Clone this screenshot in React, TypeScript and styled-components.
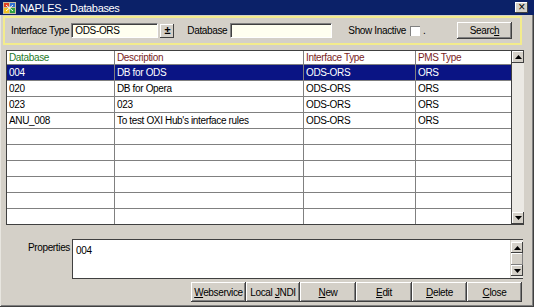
import React from "react";
import styled, { createGlobalStyle } from "styled-components";

const GlobalStyle = createGlobalStyle`
  html, body {
    margin: 0;
    padding: 0;
    background: #d4d0c8;
  }
  body {
    font-family: "Liberation Sans", Arial, sans-serif;
    font-size: 10px;
    letter-spacing: -0.35px;
    color: #000;
  }
`;

const rows = [
  { db: "004", desc: "DB for ODS", type: "ODS-ORS", pms: "ORS" },
  { db: "020", desc: "DB for Opera", type: "ODS-ORS", pms: "ORS" },
  { db: "023", desc: "023", type: "ODS-ORS", pms: "ORS" },
  { db: "ANU_008", desc: "To test OXI Hub's interface rules", type: "ODS-ORS", pms: "ORS" },
];

const columns = [
  { label: "Database", width: 108, key: true },
  { label: "Description", width: 189 },
  { label: "Interface Type", width: 112 },
  { label: "PMS Type", width: 94 },
];

const TitleIcon = () => (
  <svg width="13" height="12" viewBox="0 0 13 12">
    <rect x="0" y="0" width="13" height="12" fill="#c8c0a0" />
    <rect x="1" y="1" width="5" height="4" fill="#e04020" />
    <rect x="7" y="1" width="5" height="4" fill="#3070d0" />
    <rect x="1" y="6" width="5" height="5" fill="#f0c020" />
    <rect x="7" y="6" width="5" height="5" fill="#30a040" />
    <path d="M3 3 L10 9 M10 3 L3 9" stroke="#fff" strokeWidth="1" />
  </svg>
);

const Arrow = ({ up }: { up?: boolean }) => (
  <svg width="7" height="4" viewBox="0 0 7 4">
    <path d={up ? "M3.5 0 L7 4 L0 4 Z" : "M0 0 L7 0 L3.5 4 Z"} fill="#000" />
  </svg>
);

const App = () => {
  const empty = Array.from({ length: 6 });
  return (
    <>
      <GlobalStyle />
      <Window>
        <TitleBar>
          <TitleIcon />
          <TitleText>NAPLES - Databases</TitleText>
          <CloseBox>×</CloseBox>
        </TitleBar>

        <FilterPanel>
          <Label>Interface Type</Label>
          <Field $width={87} style={{ marginLeft: 2 }}>ODS-ORS</Field>
          <ComboBtn>±</ComboBtn>
          <Label style={{ marginLeft: 13 }}>Database</Label>
          <Field $width={102} style={{ marginLeft: 3 }} />
          <Label style={{ marginLeft: 16 }}>Show Inactive</Label>
          <Check />
          <Label style={{ marginLeft: 3 }}>.</Label>
          <Button $width={55} $height={17} style={{ marginLeft: "auto" }}>
            <span>
              Searc<u>h</u>
            </span>
          </Button>
        </FilterPanel>

        <GridWrap>
          <Grid>
            <HeaderRow>
              {columns.map((c) => (
                <HeadCell key={c.label} $width={c.width} $key={!!c.key}>
                  {c.label}
                </HeadCell>
              ))}
            </HeaderRow>
            {rows.map((r, i) => (
              <Row key={r.db} $selected={i === 0}>
                <Cell $width={108}>{r.db}</Cell>
                <Cell $width={189}>{r.desc}</Cell>
                <Cell $width={112}>{r.type}</Cell>
                <Cell $width={94}>{r.pms}</Cell>
              </Row>
            ))}
            {empty.map((_, i) => (
              <Row key={i}>
                {columns.map((c) => (
                  <Cell key={c.label} $width={c.width} />
                ))}
              </Row>
            ))}
          </Grid>
          <ScrollBar>
            <ScrollBtn>
              <Arrow up />
            </ScrollBtn>
            <Track />
            <ScrollBtn>
              <Arrow />
            </ScrollBtn>
          </ScrollBar>
        </GridWrap>

        <PropsRow>
          <PropsLabel>Properties</PropsLabel>
          <TextArea>
            <TextBody>004</TextBody>
            <ScrollBar $inset>
              <ScrollBtn>
                <Arrow up />
              </ScrollBtn>
              <Thumb />
              <Track />
              <ScrollBtn>
                <Arrow />
              </ScrollBtn>
            </ScrollBar>
          </TextArea>
        </PropsRow>

        <ButtonRow>
          <Button $width={55}>
            <span>
              <u>W</u>ebservice
            </span>
          </Button>
          <Button $width={54}>
            <span>
              Local <u>J</u>NDI
            </span>
          </Button>
          <Button $width={56}>
            <span>
              <u>N</u>ew
            </span>
          </Button>
          <Button $width={56}>
            <span>
              <u>E</u>dit
            </span>
          </Button>
          <Button $width={55}>
            <span>
              <u>D</u>elete
            </span>
          </Button>
          <Button $width={55}>
            <span>
              <u>C</u>lose
            </span>
          </Button>
        </ButtonRow>
      </Window>
    </>
  );
};

const Window = styled.div`
  width: 534px;
  height: 307px;
  box-sizing: border-box;
  background: #d4d0c8;
  display: flex;
  flex-direction: column;
  box-shadow: inset -1px -1px 0 #404040, inset 1px 1px 0 #e8e6e0,
    inset -2px -2px 0 #808080;
`;

const TitleBar = styled.div`
  height: 15px;
  background: #0b2168;
  display: flex;
  align-items: center;
  padding: 0 6px 0 3px;
  color: #fff;
`;

const TitleText = styled.span`
  margin-left: 4px;
  font-size: 11px;
`;

const CloseBox = styled.div`
  margin-left: auto;
  width: 13px;
  height: 11px;
  background: #d4d0c8;
  color: #000;
  font-size: 12px;
  line-height: 10px;
  text-align: center;
  box-shadow: inset -1px -1px 0 #404040, inset 1px 1px 0 #fff;
`;

const FilterPanel = styled.div`
  margin: 1px 12px 0 3px;
  height: 25px;
  border: 2px solid #f3ec8c;
  display: flex;
  align-items: center;
  padding: 0 8px 0 6px;
`;

const Label = styled.span`
  white-space: nowrap;
`;

const Field = styled.div<{ $width: number }>`
  width: ${(p) => p.$width}px;
  height: 15px;
  box-sizing: border-box;
  background: #fffff0;
  border-top: 1px solid #808080;
  border-left: 1px solid #808080;
  border-bottom: 1px solid #fff;
  border-right: 1px solid #fff;
  box-shadow: inset 1px 1px 0 #404040;
  padding: 1px 0 0 3px;
  line-height: 12px;
`;

const ComboBtn = styled.div`
  width: 14px;
  height: 14px;
  margin-left: 2px;
  box-sizing: border-box;
  text-align: center;
  line-height: 13px;
  font-size: 11px;
  font-weight: bold;
  box-shadow: inset -1px -1px 0 #404040, inset 1px 1px 0 #fff;
`;

const Check = styled.div`
  width: 10px;
  height: 10px;
  margin-left: 4px;
  background: #fff;
  box-shadow: inset 1px 1px 0 #808080;
`;

const Button = styled.div<{ $width: number; $height?: number }>`
  width: ${(p) => p.$width}px;
  height: ${(p) => p.$height ?? 20}px;
  box-sizing: border-box;
  display: flex;
  align-items: center;
  justify-content: center;
  white-space: nowrap;
  background: #d4d0c8;
  box-shadow: inset -1px -1px 0 #404040, inset 1px 1px 0 #fff,
    inset -2px -2px 0 #808080;
`;

const GridWrap = styled.div`
  margin: 5px 10px 0 6px;
  display: flex;
  height: 175px;
`;

const Grid = styled.div`
  flex: 1;
  background: #fff;
  border: 1px solid #404040;
  border-right: none;
  overflow: hidden;
`;

const HeaderRow = styled.div`
  display: flex;
  height: 13px;
  border-bottom: 1px solid #808080;
`;

const HeadCell = styled.div<{ $width: number; $key: boolean }>`
  width: ${(p) => p.$width}px;
  box-sizing: border-box;
  padding-left: 2px;
  line-height: 13px;
  color: ${(p) => (p.$key ? "#1e7a2a" : "#7a1e1e")};
  border-right: 1px solid #808080;
  &:last-child {
    border-right: none;
  }
`;

const Row = styled.div<{ $selected?: boolean }>`
  display: flex;
  height: 15px;
  border-bottom: 1px solid #808080;
  background: ${(p) => (p.$selected ? "#0a1484" : "#fff")};
  color: ${(p) => (p.$selected ? "#fff" : "#000")};
`;

const Cell = styled.div<{ $width: number }>`
  width: ${(p) => p.$width}px;
  box-sizing: border-box;
  padding-left: 2px;
  line-height: 15px;
  white-space: nowrap;
  border-right: 1px solid #808080;
  &:last-child {
    border-right: none;
  }
`;

const ScrollBar = styled.div<{ $inset?: boolean }>`
  width: 12px;
  display: flex;
  flex-direction: column;
  background: #ebe9e4;
  border-left: 1px solid ${(p) => (p.$inset ? "#d4d0c8" : "#404040")};
  border-top: ${(p) => (p.$inset ? "none" : "1px solid #404040")};
  border-bottom: ${(p) => (p.$inset ? "none" : "1px solid #404040")};
  padding: ${(p) => (p.$inset ? "2px 0" : "0")};
`;

const ScrollBtn = styled.div`
  height: 12px;
  display: flex;
  align-items: center;
  justify-content: center;
  background: #d4d0c8;
  box-shadow: inset -1px -1px 0 #404040, inset 1px 1px 0 #fff;
`;

const Thumb = styled.div`
  height: 13px;
  background: #d4d0c8;
  box-shadow: inset -1px -1px 0 #808080, inset 1px 1px 0 #fff;
`;

const Track = styled.div`
  flex: 1;
`;

const PropsRow = styled.div`
  margin: 14px 11px 0 0;
  display: flex;
  height: 40px;
`;

const PropsLabel = styled.div`
  width: 72px;
  text-align: right;
  padding-right: 2px;
  padding-top: 3px;
  box-sizing: border-box;
`;

const TextArea = styled.div`
  flex: 1;
  display: flex;
  background: #fff;
  border-top: 1px solid #404040;
  border-left: 1px solid #404040;
  border-bottom: 1px solid #404040;
`;

const TextBody = styled.div`
  flex: 1;
  padding: 5px 0 0 3px;
`;

const ButtonRow = styled.div`
  margin: 3px 12px 0 0;
  display: flex;
  justify-content: flex-end;
`;

export default App;
